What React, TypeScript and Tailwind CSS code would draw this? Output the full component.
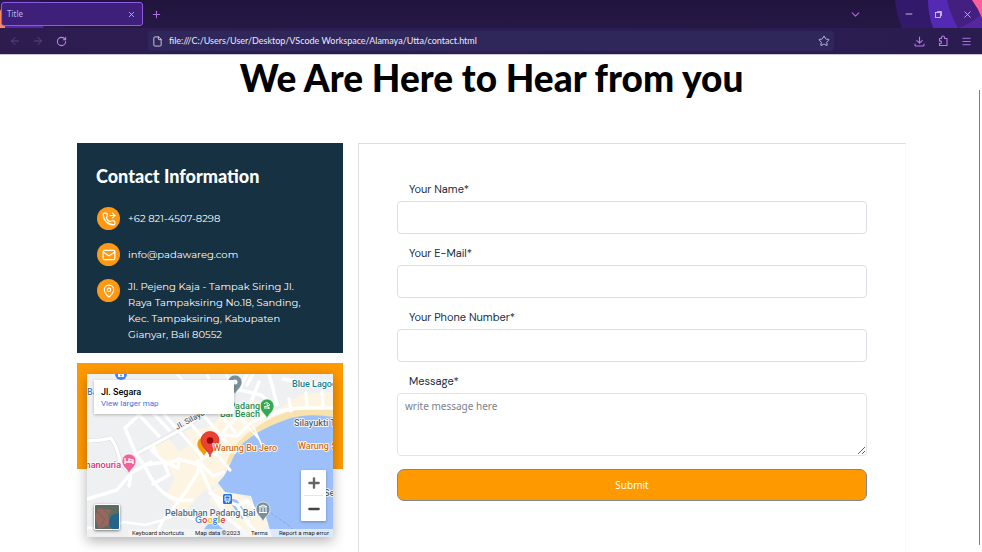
import React from "react";
import {
  ArrowLeft, ArrowRight, RotateCw, X, Plus, File, Star, ChevronDown, Minus,
  Menu, PhoneForwarded, Mail, MapPin,
} from "lucide-react";

function RestoreIcon() {
  return (
    <svg width="9" height="9" viewBox="0 0 9 9" fill="none" stroke="currentColor" strokeWidth="0.800" aria-hidden="true">
      <rect x="1.500" y="2.500" width="5" height="5" />
      <path d="M3.500 2.500V1.500H7.500V5.500H6.500" />
    </svg>
  );
}

function DownloadIcon() {
  return (
    <svg width="11" height="11" viewBox="0 0 11 11" fill="none" stroke="currentColor" strokeLinecap="round" strokeLinejoin="round" strokeWidth="1.100" aria-hidden="true">
      <path d="M5.500 1V7M2.800 4.600L5.500 7.200L8.200 4.600M1 8V9Q1 10 2 10H9Q10 10 10 9V8" />
    </svg>
  );
}

function ExtensionIcon() {
  return (
    <svg width="12" height="12" viewBox="0 0 12 12" fill="none" stroke="currentColor" strokeLinejoin="round" strokeWidth="1.100" aria-hidden="true">
      <path d="M2.500 3.500H4.500V2.500A1.500 1.500 0 0 1 7.500 2.500V3.500H10V10.500H2.500V8.500H3.200A1.300 1.300 0 0 0 3.200 5.900H2.500Z" />
    </svg>
  );
}

function TabStrip() {
  return (
    <div className="relative flex h-7 items-center bg-linear-to-b from-[#21143c] to-[#261845]">
      <svg className="absolute left-0 top-0 h-7 w-16" viewBox="0 0 64 28" aria-hidden="true">
        <path d="M0 0H40Q48 14 64 28H0Z" fill="#2b1850" />
        <path d="M0 9Q5 18 5 28H0Z" fill="#ff8a5c" />
        <path d="M5 25H42L44 28H5Z" fill="#5427a5" />
      </svg>
      <svg className="absolute right-0 top-0 h-7 w-[90px]" viewBox="0 0 90 28" aria-hidden="true">
        <path d="M3 0H90V28H10Q4 14 3 0Z" fill="#33196a" />
        <path d="M36 0H90V28H41Q36 14 36 0Z" fill="#5429b3" />
        <path d="M55 0H90V28H66Q58 14 55 0Z" fill="#43207f" />
        <path d="M66 28H90V14Q78 24 66 28Z" fill="#55279f" />
        <path d="M80 0H90V18Q86 8 80 0Z" fill="#ff5c9a" />
      </svg>
      <div className="relative ml-px flex h-6 w-[142px] items-center justify-between rounded-[3px] border border-[#8f5be0] bg-[#3e1f7a] pl-[5px] pr-[6px]">
        <span className="text-[8px] text-[#b9b4ee]">Title</span>
        <button aria-label="Close tab" className="text-[#d8ccf2]"><X size={9} strokeWidth={2} /></button>
      </div>
      <button aria-label="New tab" className="ml-2 text-[#b074e0]"><Plus size={11} strokeWidth={2.2} /></button>
      <div className="relative ml-auto flex items-center">
        <button aria-label="List all tabs" className="mr-[42px] text-[#a56bdc]"><ChevronDown size={13} strokeWidth={2.2} /></button>
        <button aria-label="Minimize" className="mr-5 text-[#e0d6f5]"><Minus size={10} /></button>
        <button aria-label="Restore" className="mr-[19px] text-[#e0d6f5]"><RestoreIcon /></button>
        <button aria-label="Close window" className="mr-[9px] text-[#d9c9f2]"><X size={11} strokeWidth={1.7} /></button>
      </div>
    </div>
  );
}

function Toolbar() {
  return (
    <div className="flex h-[27px] items-center border-b border-[#c9c5d2] bg-linear-to-r from-[#2e1c4f] via-[#2a1e52] to-[#2a1c4f]">
      <button aria-label="Back" className="ml-[9px] text-[#60408c]"><ArrowLeft size={12} /></button>
      <button aria-label="Forward" className="ml-[11px] text-[#60408c]"><ArrowRight size={12} /></button>
      <button aria-label="Reload" className="ml-3 text-[#c084f0]"><RotateCw size={11} strokeWidth={2.3} /></button>
      <div className="ml-[81px] mr-4 flex h-5 max-w-[686px] flex-1 items-center rounded-[3px] bg-[#2f265a] pl-1 pr-1">
        <File size={11} className="text-[#d6cfee]" />
        <input
          aria-label="Address"
          readOnly
          value="file:///C:/Users/User/Desktop/VScode Workspace/Alamaya/Utta/contact.html"
          className="ml-[6px] min-w-0 flex-1 bg-transparent font-[Lato,sans-serif] text-[9px] text-[#ece9f8] outline-none"
        />
        <button aria-label="Bookmark" className="text-[#c3b5e8]"><Star size={12} /></button>
      </div>
      <div className="ml-auto mr-[10px] flex items-center gap-3 text-[#b57bea]">
        <button aria-label="Downloads"><DownloadIcon /></button>
        <button aria-label="Extensions"><ExtensionIcon /></button>
        <button aria-label="Menu"><Menu size={11} /></button>
      </div>
    </div>
  );
}

function ContactRow({ icon, children }: { icon: React.ReactNode; children: React.ReactNode }) {
  return (
    <li className="flex gap-2">
      <span className="flex h-[23px] w-[23px] shrink-0 items-center justify-center rounded-full bg-[#ff9914] text-white">{icon}</span>
      <div className="flex min-h-[23px] flex-col justify-center leading-4">{children}</div>
    </li>
  );
}

function Pin({ x, y, fill, children }: { x: number; y: number; fill: string; children?: React.ReactNode }) {
  return (
    <g transform={`translate(${x} ${y})`}>
      <path d="M0 0C-1-5-7-7-7-13A7 7 0 0 1 7-13C7-7 1-5 0 0Z" fill={fill} stroke="#fff" strokeWidth="0.6" />
      {children}
    </g>
  );
}

function MapDrawing() {
  return (
    <svg className="block h-full w-full" viewBox="0 0 246 163" preserveAspectRatio="xMidYMid slice" role="img" aria-label="Map around Jl. Segara">
      <rect width="246" height="163" fill="#eff0f2" />
      <g fill="#fdf5e1">
        <path d="M66 70L80 62L92 78L104 70L98 56L120 54L146 34L168 26L190 36L215 20L246 18V40L205 41L170 55L148 76L136 108L118 116L95 140L80 120L88 104Z" />
        <path d="M128 112L165 126L182 150L168 163H158L140 140L122 128Z" />
      </g>
      <path d="M246 34L222 34Q192 37 170 53Q150 65 142 82L137 98L146 84Q162 64 191 49Q210 42 246 45Z" fill="#f8e2ad" />
      <path d="M246 43Q222 39 204 44C180 52 160 63 151 75C145 84 142 94 137 102L131 109L138 118L164 122L168 134L178 139L185 163H246Z" fill="#9dc0fa" />
      <path d="M111 163L121 150L129 149L145 163Z" fill="#9dc0fa" />
      <path d="M139 123L150 126L162 143L155 145Z" fill="#9dc0fa" />
      <g fill="none" stroke="#d9dce1" strokeWidth="4.6" strokeLinecap="round" strokeLinejoin="round">
        <path d="M49 80L101 52L118 36L150 10" />
        <path d="M0 67L14 66L24 64Q31 74 33 88L44 99" />
      </g>
      <g fill="none" stroke="#fff" strokeWidth="3.4" strokeLinecap="round" strokeLinejoin="round">
        <path d="M0 67L14 66L24 64Q31 74 33 88L44 99" />
        <path d="M49 80L101 52L118 36L132 24L154 12L160 0" />
        <path d="M38 54L49 80L57 91L64 104Q80 130 105 126" />
        <path d="M38 54L56 37L68 28M54 43L72 62M62 35L82 56M66 27L88 53" />
        <path d="M64 76L76 87L82 101L66 110M58 91L78 88M66 72L70 80" />
        <path d="M80 90L92 85L91 94L78 88M92 85L112 91" />
        <path d="M42 112L44 99L64 88M44 99L30 116L0 125" />
        <path d="M93 58L115 83L110 100L100 116L88 132L76 146L68 163" />
        <path d="M104 50L124 74L143 96M114 38L139 68M124 30L148 58M134 22L158 49" />
        <path d="M111 87L126 102L137 98M116 83L135 76L148 78M112 91L124 118L140 143L159 160" />
        <path d="M120 80L132 61L150 62L164 49Q191 34 219 34L246 34" />
        <path d="M130 67L142 51L162 33L172 8M148 15L174 21L187 31M160 11L166 0M182 0L190 30" />
        <path d="M204 37L202 25M220 33L219 19M236 33L235 18M196 5L224 10L246 8" />
        <path d="M123 119L132 124L150 131L163 152L176 163M132 125L142 145M152 131L160 127L174 142" />
        <path d="M162 54L171 64M166 52L177 76" strokeWidth="1.8" />
        <path d="M76 146L93 139L111 148M76 146L58 151L37 148L22 154M0 154L22 154" strokeWidth="2.4" />
        <path d="M104 20L118 36M120 0L128 25M90 0L108 21M139 0L145 12" strokeWidth="2.6" />
      </g>
      <path d="M184 139L201 151L214 163" fill="none" stroke="#6f9ff0" strokeWidth="0.8" strokeDasharray="3 2" />

      <circle cx="34" cy="0" r="6" fill="#4285f4" />
      <path d="M31 0H37V3H31ZM33 0V-1H35V0" fill="#fff" />
      <circle cx="34" cy="1.500" r="0.900" fill="#4285f4" />
      <Pin x={148} y={21} fill="#78909c"><circle cy="-13" r="2.5" fill="#fff" /></Pin>
      <Pin x={180} y={45} fill="#34a853">
        <path d="M-3-11L3-11M-3-15Q0-18 3-14L-3-12M0-15L2-10" stroke="#fff" fill="none" />
      </Pin>
      <Pin x={42} y={100} fill="#f0629a">
        <path d="M-4-16V-10M-4-12H4V-10M4-12V-14L0-15V-12" stroke="#fff" fill="none" strokeWidth="1.3" />
      </Pin>
      <Pin x={117} y={83} fill="#f29a05"><circle cy="-13" r="2" fill="#fff" /></Pin>
      <Pin x={176} y={148} fill="#78909c">
        <path d="M-4-15L0-17L4-15ZM-3-14V-10M0-14V-10M3-14V-10M-4-9.5H4" stroke="#fff" fill="none" />
      </Pin>
      <path d="M123 83C122 76 114 74 114 66A9 8.5 0 0 1 132 66C132 74 124 76 123 83Z" fill="#ea4335" stroke="#c5221f" strokeWidth="0.6" />
      <circle cx="123" cy="66.500" r="3.200" fill="#960a0a" />
      <rect x="136" y="120" width="9" height="10" rx="1.500" fill="#1a73e8" />
      <path d="M138 122H143V127H138ZM138 125H143M139 129L140 127M142 129L141 127" fill="none" stroke="#fff" strokeWidth="0.9" />

      <g fontFamily="Roboto, sans-serif" fontSize="9" fontWeight="500" stroke="#fff" strokeWidth="1.600" paintOrder="stroke" strokeLinejoin="round">
        <text x="0" y="21" fill="#3c78e0">Ba</text>
        <text x="205" y="13" fill="#128294">Blue Lagoon</text>
        <text x="173" y="35" fill="#1e8e4e" textAnchor="end">Padang</text>
        <text x="173" y="43" fill="#1e8e4e" textAnchor="end">Bai Beach</text>
        <text x="207" y="52" fill="#4d6370">Silayukti Temple</text>
        <text x="126" y="77" fill="#d06c12">Warung Bu Jero</text>
        <text x="211" y="75" fill="#d06c12">Warung Segara</text>
        <text x="34" y="94" fill="#d8327a" textAnchor="end">Zenmanouria</text>
        <text x="78" y="142" fill="#546a78">Pelabuhan Padang Bai</text>
        <text x="237" y="122" fill="#546a78">Selat</text>
        <text transform="translate(90 56) rotate(-29)" fill="#5f656c" fontSize="8">Jl. Silayukti</text>
      </g>
      <text x="108" y="149" fontFamily="'DM Sans', Roboto, sans-serif" fontSize="9" fontWeight="600" stroke="#fff" strokeWidth="1.200" paintOrder="stroke">
        <tspan fill="#4285f4">G</tspan><tspan fill="#ea4335">o</tspan><tspan fill="#fbbc04">o</tspan><tspan fill="#4285f4">g</tspan><tspan fill="#34a853">l</tspan><tspan fill="#ea4335">e</tspan>
      </text>
    </svg>
  );
}

function MapPanel() {
  return (
    <div className="relative h-[163px] overflow-hidden font-[Roboto,sans-serif]">
      <MapDrawing />
      <div className="absolute left-[7px] top-[6px] h-[34px] w-[140px] bg-white pl-[7px] pt-[6px] shadow-[0_1px_3px_rgba(0,0,0,0.25)]">
        <p className="text-[9px] font-medium leading-3 text-black">Jl. Segara</p>
        <a href="#map" className="block text-[8px] leading-3 text-[#3a73e0]">View larger map</a>
      </div>
      <button aria-label="Show satellite imagery" className="absolute bottom-[7px] left-[7px] h-[26px] w-[26px] overflow-hidden rounded-[2px] border border-white shadow-[0_1px_3px_rgba(0,0,0,0.5)]">
        <svg viewBox="0 0 24 24" className="h-full w-full" aria-hidden="true">
          <rect width="24" height="24" fill="#5c6c62" />
          <path d="M3 3L16 5L13 12L16 19L4 24L0 12Z" fill="#98665c" />
          <path d="M24 8Q15 9 14 16Q13 22 18 24H24Z" fill="#23658a" />
          <path d="M0 5L10 14L5 22M7 3L14 10" fill="none" stroke="#71655b" />
        </svg>
      </button>
      <div className="absolute bottom-4 right-[7px] flex h-[51px] w-[25px] flex-col items-center rounded-[1px] bg-white text-[#666] shadow-[0_1px_3px_rgba(0,0,0,0.3)]">
        <button aria-label="Zoom in" className="flex flex-1 items-center"><Plus size={16} strokeWidth={3.5} /></button>
        <span className="h-px w-[19px] bg-[#e6e6e6]" />
        <button aria-label="Zoom out" className="flex flex-1 items-center text-[#444]"><Minus size={16} strokeWidth={3.5} /></button>
      </div>
      <div className="absolute bottom-0 right-0 flex h-2 items-center gap-[11px] whitespace-nowrap bg-[#f5f5f5]/75 px-1 text-[6px] leading-2 text-[#222]">
        <button>Keyboard shortcuts</button>
        <span>Map data ©2023</span>
        <a href="#terms">Terms</a>
        <a href="#report">Report a map error</a>
      </div>
    </div>
  );
}

const inputClass = "mt-[2px] mb-[9px] block h-[33px] w-full rounded-[4px] border border-[#dcdfe4] bg-white px-2 text-[11px] outline-none";
const labelClass = "block pl-3 text-[11px] leading-5 text-[#17303f]";

function ContactForm() {
  return (
    <form onSubmit={(e) => e.preventDefault()} className="border border-[#dfdfdf] border-r-[#f8f8f8] px-[38px] pb-24 pt-[35px] font-['DM_Sans',Roboto,sans-serif]">
      <label htmlFor="name" className={labelClass}>Your Name*</label>
      <input id="name" type="text" className={inputClass} />
      <label htmlFor="email" className={labelClass}>Your E-Mail*</label>
      <input id="email" type="email" className={inputClass} />
      <label htmlFor="phone" className={labelClass}>Your Phone Number*</label>
      <input id="phone" type="tel" className={inputClass} />
      <label htmlFor="message" className={labelClass}>Message*</label>
      <textarea
        id="message"
        placeholder="write message here"
        className="mt-[2px] block h-[63px] w-full resize rounded-[4px] border border-[#e2e4e7] px-[7px] py-1 font-['Noto_Sans',sans-serif] text-[10px] leading-4 outline-none placeholder:text-[#7b838a]"
      />
      <button type="submit" className="mt-[13px] h-8 w-full rounded-[7px] border border-[#7f8790] bg-[#ff9900] font-['Noto_Sans',sans-serif] text-[10px] text-white">
        Submit
      </button>
    </form>
  );
}

export default function App() {
  return (
    <div className="relative flex h-screen flex-col overflow-hidden bg-white font-['Noto_Sans',sans-serif]">
      <header className="shrink-0">
        <TabStrip />
        <Toolbar />
      </header>
      <main className="min-h-0 flex-1 overflow-hidden pl-[77px] pr-[76px] pt-[3px]">
        <h1 className="text-center font-[Lato,sans-serif] text-[37px] font-black leading-10 text-black">We Are Here to Hear from you</h1>
        <div className="mt-[45px] grid grid-cols-[266fr_548fr] gap-[15px]">
          <div>
            <section className="bg-[#163142] pb-[10px] pl-5 pr-4 pt-[21px] text-white">
              <h2 className="-ml-px font-[Lato,sans-serif] text-[18px] font-black leading-6">Contact Information</h2>
              <ul className="mt-[19px] flex flex-col gap-[13px] font-[Montserrat,Inter,sans-serif] text-[10px]">
                <ContactRow icon={<PhoneForwarded size={14} />}>
                  <a href="tel:+6282145078298">+62 821-4507-8298</a>
                </ContactRow>
                <ContactRow icon={<Mail size={14} />}>
                  <a href="mailto:info@padawareg.com">info@padawareg.com</a>
                </ContactRow>
                <ContactRow icon={<MapPin size={14} />}>
                  <address className="not-italic">
                    Jl. Pejeng Kaja - Tampak Siring Jl.<br />
                    Raya Tampaksiring No.18, Sanding,<br />
                    Kec. Tampaksiring, Kabupaten<br />
                    Gianyar, Bali 80552
                  </address>
                </ContactRow>
              </ul>
            </section>
            <section id="map" className="mt-[10px] h-[106px] bg-[#ff9900] px-[10px] pt-[11px]">
              <div className="shadow-[0_4px_12px_rgba(0,0,0,0.3)]">
                <MapPanel />
              </div>
            </section>
          </div>
          <ContactForm />
        </div>
      </main>
      <div className="absolute bottom-[7px] right-[2px] top-[90px] w-px bg-[#808080]" />
    </div>
  );
}
